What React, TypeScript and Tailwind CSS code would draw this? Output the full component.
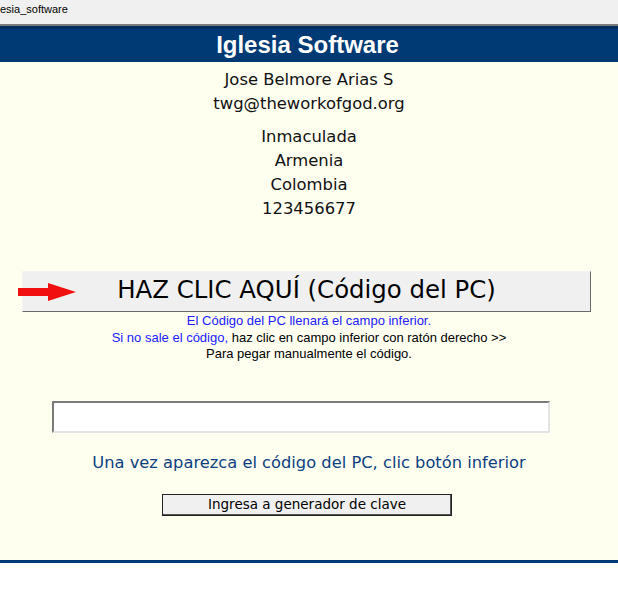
import React from 'react';

const body = { fontFamily: '"DejaVu Sans", Verdana, sans-serif' };
const arial = { fontFamily: '"Liberation Sans", Arial, sans-serif' };

function Arrow() {
  return (
    <svg width="60" height="20" viewBox="0 0 60 20" className="absolute left-[18px] top-[11px]">
      <rect x="0" y="6" width="32" height="8" fill="#f01010" />
      <polygon points="30,1 58,10 30,19" fill="#f01010" />
    </svg>
  );
}

export default function App() {
  return (
    <div className="w-[618px] h-[590px] bg-white overflow-hidden flex flex-col">
      {/* window title */}
      <div className="h-[24px] bg-[#f0f0f0] flex items-center text-[11px] text-black leading-none" style={arial}>
        <span className="-mt-[6px]">esia_software</span>
      </div>
      <div className="h-[2px] bg-[#7a7a7a]" />

      {/* header */}
      <div className="h-[36px] bg-[#003a75] border-t-[3px] border-[#002d5e] flex items-center justify-center">
        <h1 className="text-white font-bold text-[24px] leading-none -mt-[2px] -ml-[3px]" style={arial}>Iglesia Software</h1>
      </div>

      {/* main */}
      <div className="h-[498px] bg-[#fffff0] flex flex-col items-center text-center pt-[6px]">
        <div className="text-[16.4px] leading-[24px] text-[#111]" style={body}>
          <p>Jose Belmore Arias S</p>
          <p>twg@theworkofgod.org</p>
        </div>
        <div className="mt-[9px] text-[16.4px] leading-[24px] text-[#111]" style={body}>
          <p>Inmaculada</p>
          <p>Armenia</p>
          <p>Colombia</p>
          <p>123456677</p>
        </div>

        <div className="relative w-full mt-[50px]">
          <Arrow />
          <button
            className="ml-[22px] w-[569px] h-[41px] bg-[#f0f0f0] border border-t-[#f4f4f4] border-l-[#f4f4f4] border-r-[#696969] border-b-[#696969] text-[24.4px] text-black leading-none flex items-center justify-center pb-[2px]"
            style={body}
          >
            HAZ CLIC AQUÍ (Código del PC)
          </button>
        </div>

        <div className="text-[13px] leading-[16.5px] text-black mt-[1px]" style={arial}>
          <p className="text-[#2020ff]">El Código del PC llenará el campo inferior.</p>
          <p>
            <span className="text-[#2020ff]">Si no sale el código,</span> haz clic en campo inferior con ratón derecho &gt;&gt;
          </p>
          <p>Para pegar manualmente el código.</p>
        </div>

        <input
          type="text"
          className="self-start ml-[52px] mt-[38px] w-[498px] h-[32px] bg-white border-2 border-t-[#7a7a7a] border-l-[#7a7a7a] border-r-[#e4e4e4] border-b-[#e4e4e4] outline-none"
        />

        <p className="mt-[18px] text-[16.3px] leading-[24px] text-[#0b3f80]" style={body}>
          Una vez aparezca el código del PC, clic botón inferior
        </p>

        <button
          className="self-start ml-[162px] mt-[19px] w-[290px] h-[22px] bg-[#f0f0f0] border border-[#222] shadow-[inset_-1px_-1px_0_#555] text-[13.5px] text-black leading-none flex items-center justify-center"
          style={body}
        >
          Ingresa a generador de clave
        </button>
      </div>
      <div className="h-[3px] bg-[#003a75]" />
      <div className="flex-1 bg-white" />
    </div>
  );
}
